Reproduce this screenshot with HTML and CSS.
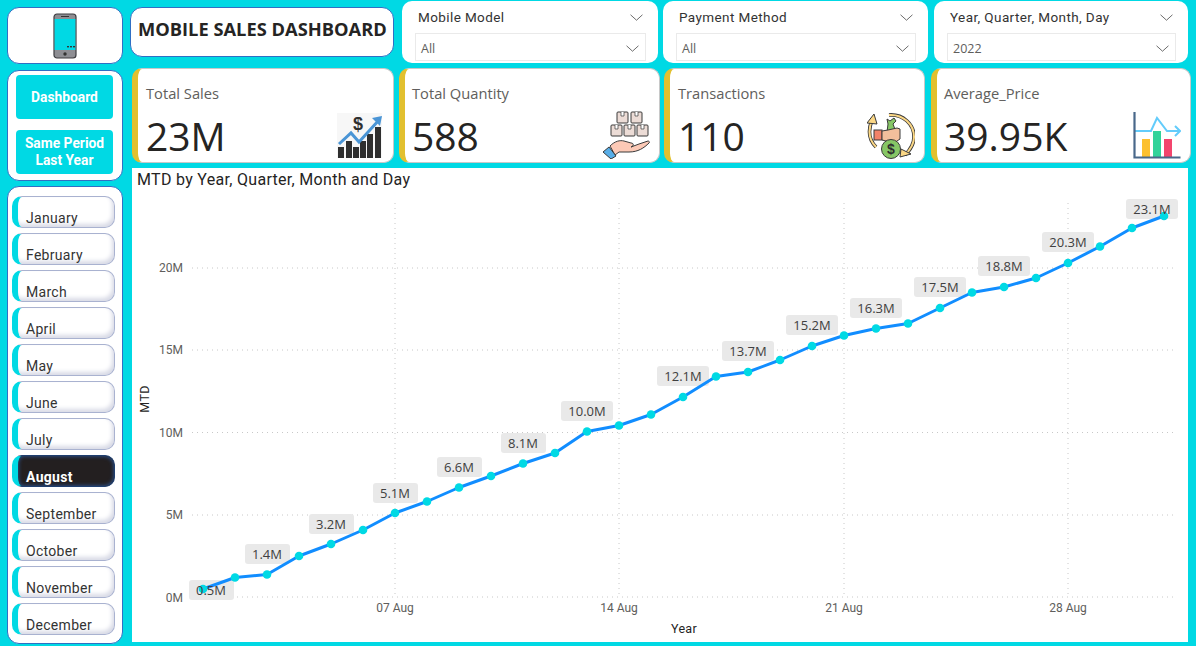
FILE: index.html
```html
<!DOCTYPE html>
<html lang="en">
<head>
    <meta charset="UTF-8">
    <title>Mobile Sales Dashboard</title>
    <link rel="stylesheet" href="styles.css">
</head>
<body>
<div class="page">

    <aside class="sidebar">
        <div class="panel logo-panel">
            <svg class="phone" viewBox="0 0 24 46" width="24" height="46">
                <rect x="1" y="1" width="22" height="44" rx="3" fill="#8e8e93" stroke="#3c3c40" stroke-width="1.2"/>
                <rect x="1.6" y="6" width="20.8" height="31" fill="#00d9e4"/>
                <rect x="8" y="3" width="8" height="1" fill="#333"/>
                <circle cx="12" cy="41" r="1.7" fill="#333"/>
                <rect x="14" y="33" width="2" height="1.4" fill="#333"/>
                <rect x="17" y="33" width="2" height="1.4" fill="#333"/>
                <rect x="20" y="33" width="2" height="1.4" fill="#333"/>
            </svg>
        </div>
        <nav class="panel nav-panel">
            <a class="nav-btn">Dashboard</a>
            <a class="nav-btn">Same Period<br>Last Year</a>
        </nav>
        <div class="panel month-panel">
            <button class="month">January</button>
            <button class="month">February</button>
            <button class="month">March</button>
            <button class="month">April</button>
            <button class="month">May</button>
            <button class="month">June</button>
            <button class="month">July</button>
            <button class="month active">August</button>
            <button class="month">September</button>
            <button class="month">October</button>
            <button class="month">November</button>
            <button class="month">December</button>
        </div>
    </aside>

    <main class="content">
        <header class="top-row">
            <h1 class="title-box">MOBILE SALES DASHBOARD</h1>
            <div class="slicer s1">
                <div class="slicer-head">Mobile Model <svg class="chev" viewBox="0 0 12 6"><path d="M.5.5 6 5.5 11.5.5"/></svg></div>
                <div class="slicer-box">All <svg class="chev" viewBox="0 0 12 6"><path d="M.5.5 6 5.5 11.5.5"/></svg></div>
            </div>
            <div class="slicer s2">
                <div class="slicer-head">Payment Method <svg class="chev" viewBox="0 0 12 6"><path d="M.5.5 6 5.5 11.5.5"/></svg></div>
                <div class="slicer-box">All <svg class="chev" viewBox="0 0 12 6"><path d="M.5.5 6 5.5 11.5.5"/></svg></div>
            </div>
            <div class="slicer s3">
                <div class="slicer-head">Year, Quarter, Month, Day <svg class="chev" viewBox="0 0 12 6"><path d="M.5.5 6 5.5 11.5.5"/></svg></div>
                <div class="slicer-box">2022 <svg class="chev" viewBox="0 0 12 6"><path d="M.5.5 6 5.5 11.5.5"/></svg></div>
            </div>
        </header>

        <section class="cards">
            <div class="card">
                <div class="card-label">Total Sales</div>
                <div class="card-value">23M</div>
                <svg class="card-icon" viewBox="0 0 46 46" width="46" height="46">
                    <rect x="0" y="0" width="45" height="45" fill="#f7f7f7"/>
                    <path fill="#2f2f2f" d="M1 34h6v11H1zM9 28h6v17H9zM16 34h6v11h-6zM23 28h6v17h-6zM30 21h6v24h-6zM38 14h6v31h-6z"/>
                    <path d="M2 31 14 20l8 9L42 7" fill="none" stroke="#4a95d6" stroke-width="3"/>
                    <path d="M35 5l10-2-2 10z" fill="#4a95d6"/>
                    <text class="icon-dollar" x="16" y="17">$</text>
                </svg>
            </div>
            <div class="card">
                <div class="card-label">Total Quantity</div>
                <div class="card-value">588</div>
                <svg class="card-icon" viewBox="0 0 48 48" width="48" height="48">
                    <g fill="#ecdcd6" stroke="#3a3a3a" stroke-width="1">
                        <rect x="15" y="1" width="11" height="11" rx="1"/>
                        <rect x="29" y="1" width="11" height="11" rx="1"/>
                        <rect x="9" y="14" width="11" height="11" rx="1"/>
                        <rect x="22" y="14" width="11" height="11" rx="1"/>
                        <rect x="35" y="14" width="11" height="11" rx="1"/>
                    </g>
                    <path d="M19 1v4h3V1M33 1v4h3V1M13 14v4h3v-4M26 14v4h3v-4M39 14v4h3v-4" fill="#fff" stroke="#3a3a3a" stroke-width=".7"/>
                    <path d="M8 35c5-5 10-6 14-5l7 2c3 0 3 3 0 4l8-3 9-3c1 0 2 1 1 2-5 5-11 9-20 9H17l-4 3z" fill="#fcc9b6" stroke="#3a3a3a" stroke-width="1"/>
                    <path d="M1 41l6-5 7 9-5 3z" fill="#58aee8" stroke="#3a3a3a" stroke-width="1"/>
                </svg>
            </div>
            <div class="card">
                <div class="card-label">Transactions</div>
                <div class="card-value">110</div>
                <svg class="card-icon" viewBox="0 0 48 48" width="48" height="48">
                    <path d="M22 4C36 3 47 13 47 26c0 7-3 12-9 18" fill="none" stroke="#3a3a3a" stroke-width="3.600"/>
                    <path d="M22 4C36 3 47 13 47 26c0 7-3 12-9 18" fill="none" stroke="#fbd785" stroke-width="2"/>
                    <path d="M34 38l10 5-11 3z" fill="#fbd785" stroke="#3a3a3a"/>
                    <path d="M9 36C2 29 1 19 5 9" fill="none" stroke="#3a3a3a" stroke-width="3.600"/>
                    <path d="M9 36C2 29 1 19 5 9" fill="none" stroke="#fbd785" stroke-width="2"/>
                    <path d="M0 12l7-9 3 10z" fill="#fbd785" stroke="#3a3a3a"/>
                    <path d="M20 8l3 2 4-3 2 3-3 3 3 8h-9l1-8z" fill="#86c665" stroke="#3a3a3a"/>
                    <rect x="7" y="19" width="8" height="10" fill="#f28269" stroke="#3a3a3a"/>
                    <path d="M15 20l6-1 9-2 3 1v10l-6 4-12-3z" fill="#f2bf9c" stroke="#3a3a3a"/>
                    <circle cx="24" cy="38" r="9.500" fill="#86c665" stroke="#3a3a3a"/>
                    <text class="icon-bag" x="24" y="43">$</text>
                </svg>
            </div>
            <div class="card">
                <div class="card-label">Average_Price</div>
                <div class="card-value">39.95K</div>
                <svg class="card-icon" viewBox="0 0 48 48" width="48" height="48">
                    <rect x="9" y="28" width="8" height="18" fill="#fcc02f"/>
                    <rect x="20" y="20" width="8" height="26" fill="#31d39a"/>
                    <rect x="31" y="28" width="8" height="18" fill="#f3456d"/>
                    <path d="M2 20h16l6-13 10 13h12" fill="none" stroke="#63ccfb" stroke-width="2"/>
                    <path d="M42 15l5 5-5 5" fill="none" stroke="#63ccfb" stroke-width="2"/>
                    <path d="M1.500 1v45.500h46" fill="none" stroke="#49688a" stroke-width="2.200"/>
                </svg>
            </div>
        </section>

        <section class="chart-panel">
            <div class="chart-title">MTD by Year, Quarter, Month and Day</div>
            <svg class="chart" viewBox="132 190 1056 452" width="1056" height="452">
                <g class="grid">
                    <line x1="192" y1="268" x2="1174" y2="268"/>
                    <line x1="192" y1="350" x2="1174" y2="350"/>
                    <line x1="192" y1="432.500" x2="1174" y2="432.500"/>
                    <line x1="192" y1="515" x2="1174" y2="515"/>
                    <line x1="192" y1="597" x2="1174" y2="597"/>
                    <line x1="395" y1="203" x2="395" y2="597"/>
                    <line x1="619" y1="203" x2="619" y2="597"/>
                    <line x1="844" y1="203" x2="844" y2="597"/>
                    <line x1="1068" y1="203" x2="1068" y2="597"/>
                </g>
                <g class="tick-y">
                    <text x="183" y="272">20M</text>
                    <text x="183" y="354">15M</text>
                    <text x="183" y="437">10M</text>
                    <text x="183" y="519">5M</text>
                    <text x="183" y="602">0M</text>
                </g>
                <g class="tick-x">
                    <text x="395" y="612">07 Aug</text>
                    <text x="619" y="612">14 Aug</text>
                    <text x="844" y="612">21 Aug</text>
                    <text x="1068" y="612">28 Aug</text>
                </g>
                <text class="axis-name" x="684" y="633">Year</text>
                <text class="axis-name" transform="translate(149 399) rotate(-90)">MTD</text>

                <!-- label backgrounds go under the line, label text over it -->
                <g class="pills">
                    <rect x="189" y="580" width="45" height="20" rx="3"/>
                    <rect x="245" y="544" width="45" height="20" rx="3"/>
                    <rect x="309" y="514" width="45" height="20" rx="3"/>
                    <rect x="373" y="483" width="45" height="20" rx="3"/>
                    <rect x="437" y="457" width="45" height="20" rx="3"/>
                    <rect x="501" y="433" width="45" height="20" rx="3"/>
                    <rect x="561" y="401" width="52" height="20" rx="3"/>
                    <rect x="657" y="366" width="52" height="20" rx="3"/>
                    <rect x="722" y="341" width="52" height="20" rx="3"/>
                    <rect x="786" y="315" width="52" height="20" rx="3"/>
                    <rect x="850" y="298" width="52" height="20" rx="3"/>
                    <rect x="914" y="277" width="52" height="20" rx="3"/>
                    <rect x="978" y="256" width="52" height="20" rx="3"/>
                    <rect x="1042" y="232" width="52" height="20" rx="3"/>
                    <rect x="1126" y="199" width="52" height="20" rx="3"/>
                </g>
                <polyline class="line" points="203,589 235,577.500 267,574.500 299,556 331,544 363,530 395,513 427,501.500 459,487.500 491,476 523,463.500 555,453 587,431.500 619,425.500 651,414.500 683,397 716,376.500 748,372 780,360 812,346 844,335.500 876,328.500 908,323.500 940,308 972,292.500 1004,287 1036,278 1068,263 1100,246.500 1132,228 1164,216"/>
                <g class="dots">
                    <circle cx="203" cy="589" r="4.300"/><circle cx="235" cy="577.500" r="4.300"/><circle cx="267" cy="574.500" r="4.300"/>
                    <circle cx="299" cy="556" r="4.300"/><circle cx="331" cy="544" r="4.300"/><circle cx="363" cy="530" r="4.300"/>
                    <circle cx="395" cy="513" r="4.300"/><circle cx="427" cy="501.500" r="4.300"/><circle cx="459" cy="487.500" r="4.300"/>
                    <circle cx="491" cy="476" r="4.300"/><circle cx="523" cy="463.500" r="4.300"/><circle cx="555" cy="453" r="4.300"/>
                    <circle cx="587" cy="431.500" r="4.300"/><circle cx="619" cy="425.500" r="4.300"/><circle cx="651" cy="414.500" r="4.300"/>
                    <circle cx="683" cy="397" r="4.300"/><circle cx="716" cy="376.500" r="4.300"/><circle cx="748" cy="372" r="4.300"/>
                    <circle cx="780" cy="360" r="4.300"/><circle cx="812" cy="346" r="4.300"/><circle cx="844" cy="335.500" r="4.300"/>
                    <circle cx="876" cy="328.500" r="4.300"/><circle cx="908" cy="323.500" r="4.300"/><circle cx="940" cy="308" r="4.300"/>
                    <circle cx="972" cy="292.500" r="4.300"/><circle cx="1004" cy="287" r="4.300"/><circle cx="1036" cy="278" r="4.300"/>
                    <circle cx="1068" cy="263" r="4.300"/><circle cx="1100" cy="246.500" r="4.300"/><circle cx="1132" cy="228" r="4.300"/>
                    <circle cx="1164" cy="216" r="4.300"/>
                </g>
                <g class="pill-text">
                    <text x="211" y="595">0.5M</text>
                    <text x="267" y="559">1.4M</text>
                    <text x="331" y="529">3.2M</text>
                    <text x="395" y="498">5.1M</text>
                    <text x="459" y="472">6.6M</text>
                    <text x="523" y="448">8.1M</text>
                    <text x="587" y="416">10.0M</text>
                    <text x="683" y="381">12.1M</text>
                    <text x="748" y="356">13.7M</text>
                    <text x="812" y="330">15.2M</text>
                    <text x="876" y="313">16.3M</text>
                    <text x="940" y="292">17.5M</text>
                    <text x="1004" y="271">18.8M</text>
                    <text x="1068" y="247">20.3M</text>
                    <text x="1152" y="214">23.1M</text>
                </g>
            </svg>
        </section>
    </main>
</div>
</body>
</html>
```

FILE: styles.css
```css
* { box-sizing: border-box; }
html, body { margin: 0; height: 100%; }
body { background-color: #00d9e4; font-family: "Open Sans", sans-serif; color: #252423; overflow: hidden; }

.page { display: flex; width: 1196px; height: 646px; padding-left: 7px; }

/* left column */
.sidebar { width: 116px; flex: none; padding-top: 7px; display: flex; flex-direction: column; }
.panel { background: white; border: 1px solid #2f6fc4; border-radius: 12px; }
.logo-panel { height: 57px; margin-bottom: 6px; display: flex; align-items: center; justify-content: center; }
.nav-panel { height: 111px; margin-bottom: 5px; padding: 4px 9px 0 8px; display: flex; flex-direction: column; gap: 11px; }
.nav-btn { height: 44px; background-color: #00d9e4; border-radius: 4px; color: white; font-family: Roboto, sans-serif; font-weight: 700; font-size: 13.800px; line-height: 17px; text-align: center; display: flex; align-items: center; justify-content: center; }
.month-panel { height: 458px; padding: 9px 7px 0 4px; display: flex; flex-direction: column; gap: 5px; }
.month { height: 32px; flex: none; padding: 0 0 1px 8px; background: white; border: 1px solid #a9b2d0; border-left: 6px solid #00d9e4; border-radius: 10px; box-shadow: inset -2px -3px 4px #d8dae6; font-family: Roboto, sans-serif; font-size: 14px; letter-spacing: .3px; line-height: 16px; color: #333; text-align: left; display: flex; align-items: flex-end; }
.month.active { background: #231f20; color: white; font-weight: 700; border-color: #1f3f70; border-left-color: #00d9e4; box-shadow: inset 0 0 4px #2f5ea8; }

/* right column */
.content { width: 1059px; flex: none; margin: 1px 0 0 7px; }
.top-row { display: flex; height: 62px; }
.title-box { width: 264px; height: 50px; flex: none; margin: 6px 8px 0 0; background: white; border: 1px solid #2f6fc4; border-radius: 12px; font-size: 18.300px; font-weight: 700; line-height: 42px; padding-left: 7px; white-space: nowrap; }
.slicer { height: 62px; background: white; border-radius: 10px; padding: 6px 12px 0 13px; flex: none; }
.s1 { width: 256px; margin-right: 5px; }
.s2 { width: 265px; margin-right: 6px; }
.s3 { width: 254px; }
.slicer-head { display: flex; justify-content: space-between; align-items: center; height: 20px; padding: 0 3px; font-family: Roboto, sans-serif; font-size: 13.500px; letter-spacing: .4px; color: #333; }
.slicer-box { display: flex; justify-content: space-between; align-items: center; height: 28px; margin-top: 6px; border: 1px solid #eaeaea; padding: 2px 6px 0 5px; font-family: "Open Sans", sans-serif; font-size: 12.500px; color: #605e5c; }
.chev { width: 13px; height: 7px; }
.chev path { fill: none; stroke: #555; stroke-width: .8; }

.cards { display: flex; margin: 5px 0 0 2px; }
.card { position: relative; flex: none; width: 262px; height: 95px; margin-right: 5px; background: white; border: 1px solid #c8c8c8; border-left: 6px solid #e2c02f; border-radius: 10px; padding: 14px 0 0 8px; }
.card:nth-child(2) { width: 261px; margin-right: 4px; padding-left: 7px; }
.card:nth-child(3) { width: 261px; margin-right: 6px; }
.card:nth-child(4) { width: 260px; margin-right: 0; padding-left: 7px; }
.card-label { font-size: 14.700px; line-height: 20px; color: #605e5c; }
.card-value { font-size: 39px; font-weight: 500; line-height: 54px; margin-top: 6px; color: #252423; }
.card-icon { position: absolute; right: 9px; bottom: 3px; }
.card:first-child .card-icon { right: 10px; }
.icon-dollar { font-size: 18px; font-weight: 700; fill: #2f2f2f; font-family: "Liberation Sans", sans-serif; }
.icon-bag { font-size: 14px; font-weight: 700; fill: #2f2f2f; text-anchor: middle; font-family: "Liberation Sans", sans-serif; }

.chart-panel { width: 1056px; height: 474px; margin: 5px 0 0 2px; background: white; }
.chart-title { height: 22px; padding: 2px 0 0 5px; font-family: Roboto, sans-serif; font-size: 16px; letter-spacing: .3px; line-height: 20px; color: #252423; }
.chart { display: block; }
.grid line { stroke: #c8c8c8; stroke-width: 1; stroke-dasharray: 1 4; }
.tick-y text { font-family: Roboto, sans-serif; font-size: 12px; fill: #605e5c; text-anchor: end; }
.tick-x text { font-family: Roboto, sans-serif; font-size: 12px; fill: #605e5c; text-anchor: middle; }
.axis-name { font-family: Roboto, sans-serif; font-size: 12.500px; fill: #252423; text-anchor: middle; letter-spacing: .3px; }
.line { fill: none; stroke: #118dff; stroke-width: 3; stroke-linejoin: round; }
.dots circle { fill: #00d9e4; }
.pills rect { fill: #e9e9e9; }
.pill-text text { font-family: "Open Sans", sans-serif; font-size: 13px; fill: #404040; text-anchor: middle; }
```
